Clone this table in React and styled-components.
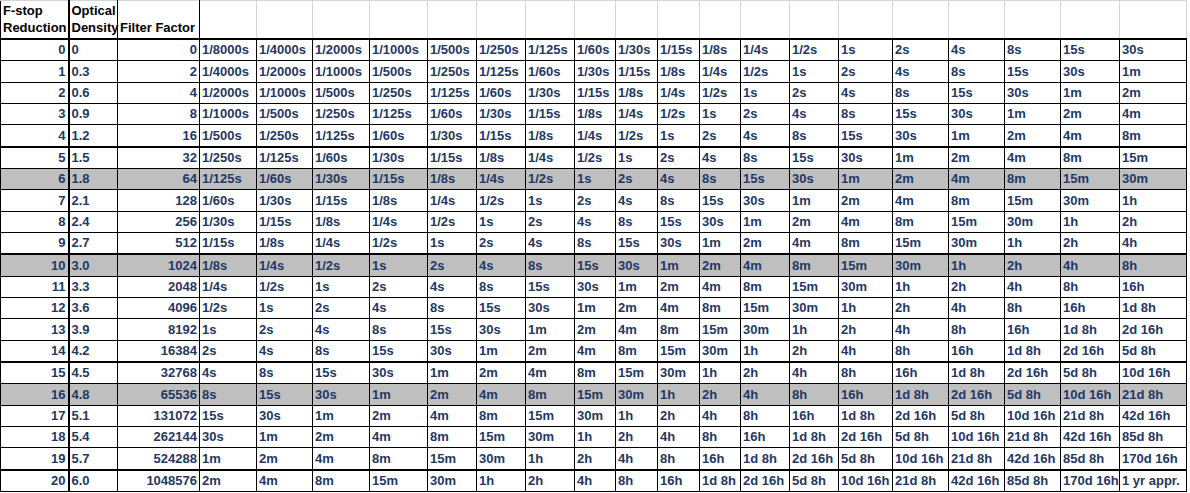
import React from "react";
import styled, { createGlobalStyle } from "styled-components";

const GlobalStyle = createGlobalStyle`
  html, body {
    margin: 0;
    padding: 0;
    background: #ffffff;
  }
  body {
    font-family: "Liberation Sans", Arial, sans-serif;
  }
`;

const COL_WIDTHS = [
  68, 49, 82, 57, 56, 57, 58, 49, 49, 49, 41, 42, 42, 41, 49, 49, 54, 56, 56,
  56, 59, 67,
];

const SHUTTER = [
  "1/8000s", "1/4000s", "1/2000s", "1/1000s", "1/500s", "1/250s", "1/125s",
  "1/60s", "1/30s", "1/15s", "1/8s", "1/4s", "1/2s", "1s", "2s", "4s", "8s",
  "15s", "30s", "1m", "2m", "4m", "8m", "15m", "30m", "1h", "2h", "4h", "8h",
  "16h", "1d 8h", "2d 16h", "5d 8h", "10d 16h", "21d 8h", "42d 16h", "85d 8h",
  "170d 16h", "1 yr appr.",
];

const SHADED = [6, 10, 16];
const EXPOSURE_COLS = 19;

const Sheet = styled.table`
  border-collapse: collapse;
  table-layout: fixed;
  width: 1186px;
  font-family: "Liberation Sans", Arial, sans-serif;
  font-weight: bold;
  font-size: 13px;
`;

const HeadCell = styled.th`
  height: 35px;
  padding: 0 2px 2px 2px;
  text-align: left;
  vertical-align: bottom;
  font-weight: bold;
  line-height: 17px;
  color: #000000;
  white-space: nowrap;
  border-top: 1px solid #d4d4d4;
  border-left: 1px solid ${({ $grid }) => ($grid ? "#d4d4d4" : "#000000")};
  border-right: ${({ $thickRight, $grid }) =>
    $thickRight ? "2px solid #000000" : $grid ? "1px solid #d4d4d4" : "1px solid #000000"};
  border-bottom: 2px solid #000000;
`;

const Cell = styled.td`
  height: ${({ $tall }) => ($tall ? "21px" : "20px")};
  padding: 0 2px;
  line-height: 20px;
  white-space: nowrap;
  overflow: hidden;
  text-align: ${({ $align }) => $align || "left"};
  color: #1f3864;
  background: ${({ $shaded }) => ($shaded ? "#bfbfbf" : "#ffffff")};
  border: 1px solid #000000;
  border-top-width: ${({ $thickTop }) => ($thickTop ? "2px" : "1px")};
  border-right-width: ${({ $thickRight }) => ($thickRight ? "2px" : "1px")};
`;

const rows = Array.from({ length: 21 }, (_, r) => ({
  stop: r,
  density: r === 0 ? "0" : (r * 0.3).toFixed(1),
  factor: r === 0 ? 0 : 2 ** r,
  times: SHUTTER.slice(r, r + EXPOSURE_COLS),
}));

const App = () => (
  <>
    <GlobalStyle />
    <Sheet>
      <colgroup>
        {COL_WIDTHS.map((w, i) => (
          <col key={i} style={{ width: w }} />
        ))}
      </colgroup>
      <thead>
        <tr>
          <HeadCell $thickRight>
            F-stop
            <br />
            Reduction
          </HeadCell>
          <HeadCell>
            Optical
            <br />
            Density
          </HeadCell>
          <HeadCell>Filter Factor</HeadCell>
          {Array.from({ length: EXPOSURE_COLS }, (_, i) => (
            <HeadCell key={i} $grid />
          ))}
        </tr>
      </thead>
      <tbody>
        {rows.map((row) => {
          const shaded = SHADED.includes(row.stop);
          const thickTop = row.stop > 0 && row.stop % 5 === 0;
          // spreadsheet rows are ~21.5px, so every third row gets an extra pixel
          const tall = row.stop % 3 === 1;
          const common = { $shaded: shaded, $thickTop: thickTop, $tall: tall };
          return (
            <tr key={row.stop}>
              <Cell $align="right" $thickRight {...common}>
                {row.stop}
              </Cell>
              <Cell {...common}>{row.density}</Cell>
              <Cell $align="right" {...common}>
                {row.factor}
              </Cell>
              {row.times.map((t, i) => (
                <Cell key={i} {...common}>
                  {t}
                </Cell>
              ))}
            </tr>
          );
        })}
      </tbody>
    </Sheet>
  </>
);

export default App;
